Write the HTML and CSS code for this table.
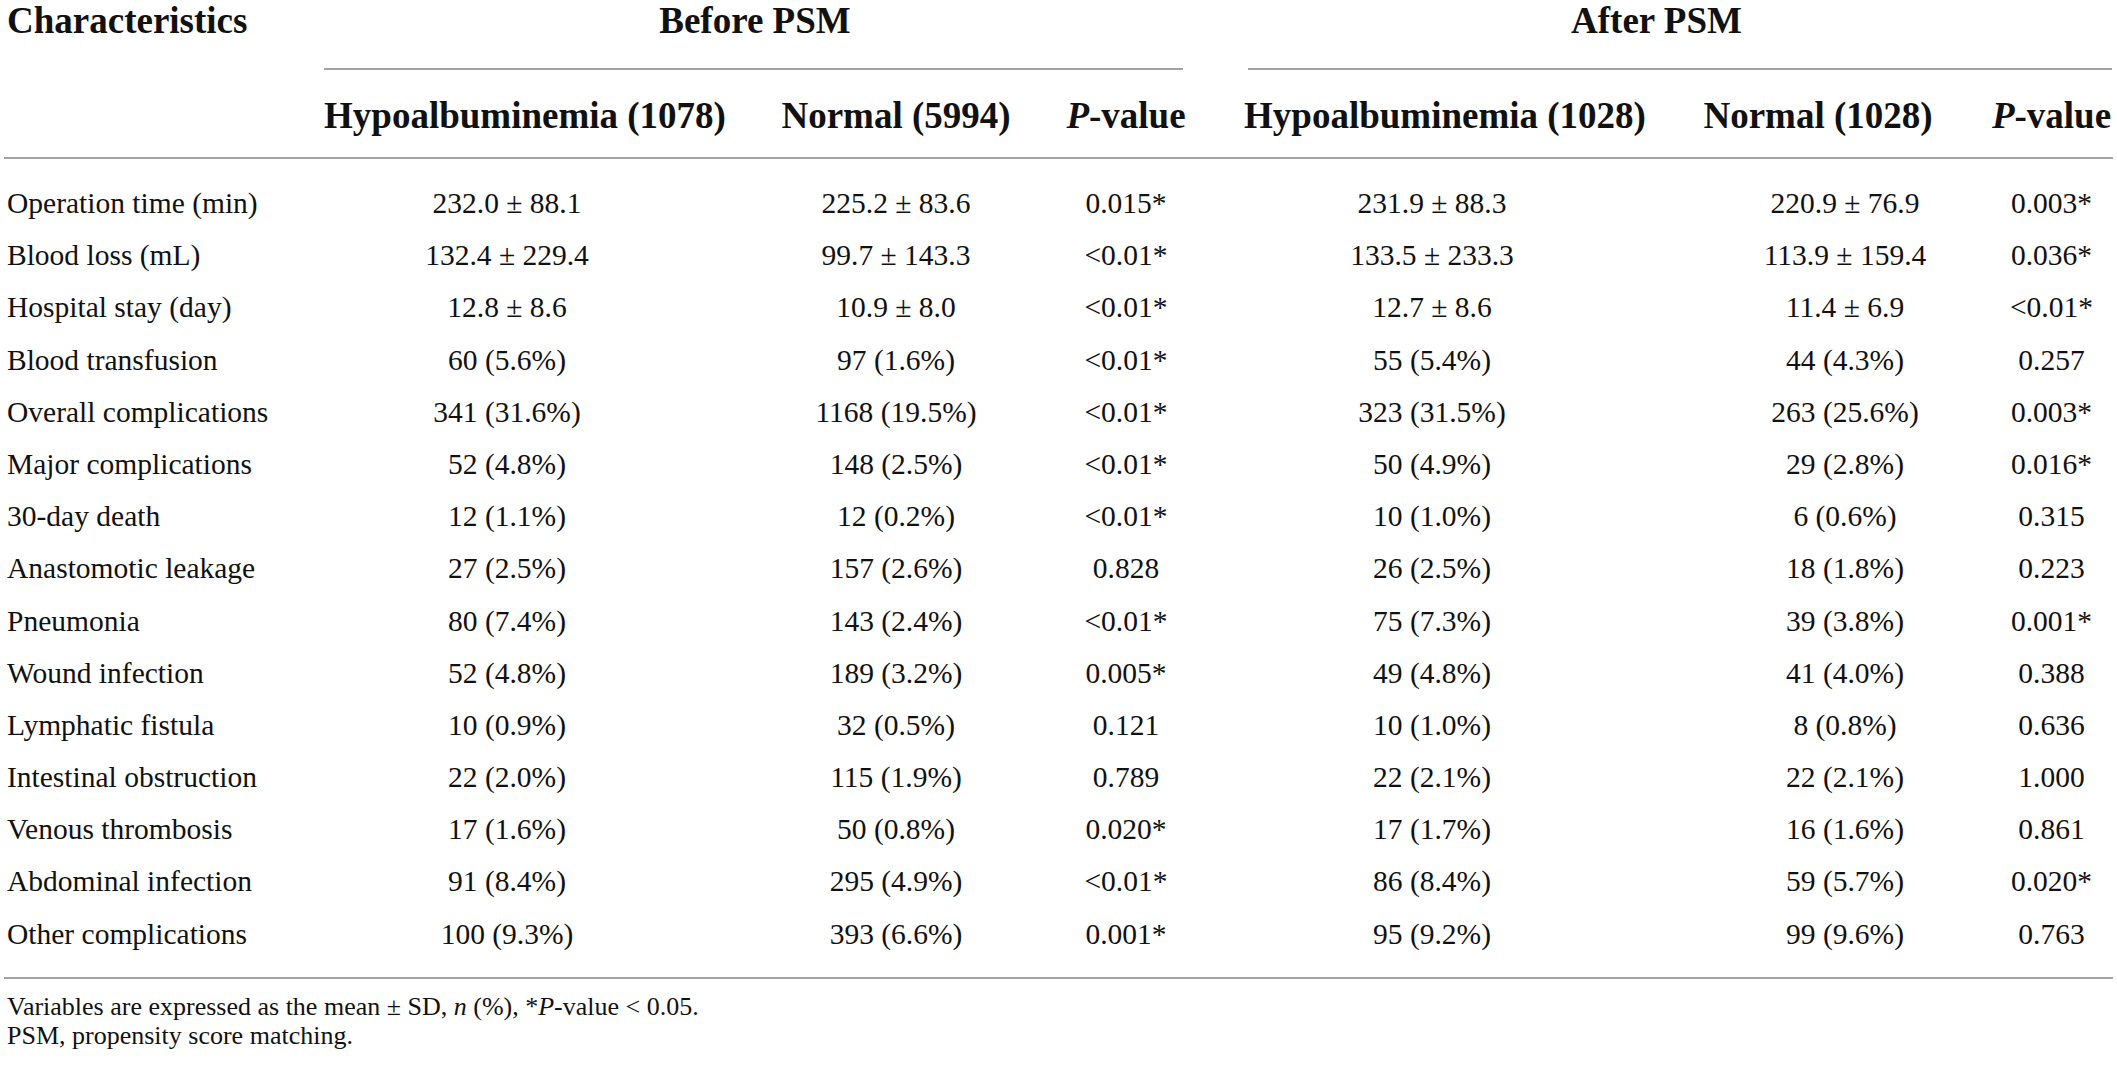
FILE: index.html
```html
<!DOCTYPE html>
<html lang="en">
<head>
<meta charset="utf-8">
<title>Table</title>
<link rel="stylesheet" href="styles.css">
</head>
<body>
<div class="page">
  <div class="thead">
    <div class="char">Characteristics</div>
    <div class="grp grp-before">Before PSM</div>
    <div class="grp grp-after">After PSM</div>
    <div class="sub sub0"></div>
    <div class="sub">Hypoalbuminemia (1078)</div>
    <div class="sub">Normal (5994)</div>
    <div class="sub"><i>P</i>-value</div>
    <div class="sub">Hypoalbuminemia (1028)</div>
    <div class="sub h5">Normal (1028)</div>
    <div class="sub"><i>P</i>-value</div>
  </div>
  <div class="tbody">
    <div class="lbl">Operation time (min)</div><div class="k1">232.0 ± 88.1</div><div>225.2 ± 83.6</div><div>0.015*</div><div class="k4">231.9 ± 88.3</div><div class="k5">220.9 ± 76.9</div><div>0.003*</div>
    <div class="lbl">Blood loss (mL)</div><div class="k1">132.4 ± 229.4</div><div>99.7 ± 143.3</div><div>&lt;0.01*</div><div class="k4">133.5 ± 233.3</div><div class="k5">113.9 ± 159.4</div><div>0.036*</div>
    <div class="lbl">Hospital stay (day)</div><div class="k1">12.8 ± 8.6</div><div>10.9 ± 8.0</div><div>&lt;0.01*</div><div class="k4">12.7 ± 8.6</div><div class="k5">11.4 ± 6.9</div><div>&lt;0.01*</div>
    <div class="lbl">Blood transfusion</div><div class="k1">60 (5.6%)</div><div>97 (1.6%)</div><div>&lt;0.01*</div><div class="k4">55 (5.4%)</div><div class="k5">44 (4.3%)</div><div>0.257</div>
    <div class="lbl">Overall complications</div><div class="k1">341 (31.6%)</div><div>1168 (19.5%)</div><div>&lt;0.01*</div><div class="k4">323 (31.5%)</div><div class="k5">263 (25.6%)</div><div>0.003*</div>
    <div class="lbl">Major complications</div><div class="k1">52 (4.8%)</div><div>148 (2.5%)</div><div>&lt;0.01*</div><div class="k4">50 (4.9%)</div><div class="k5">29 (2.8%)</div><div>0.016*</div>
    <div class="lbl">30-day death</div><div class="k1">12 (1.1%)</div><div>12 (0.2%)</div><div>&lt;0.01*</div><div class="k4">10 (1.0%)</div><div class="k5">6 (0.6%)</div><div>0.315</div>
    <div class="lbl">Anastomotic leakage</div><div class="k1">27 (2.5%)</div><div>157 (2.6%)</div><div>0.828</div><div class="k4">26 (2.5%)</div><div class="k5">18 (1.8%)</div><div>0.223</div>
    <div class="lbl">Pneumonia</div><div class="k1">80 (7.4%)</div><div>143 (2.4%)</div><div>&lt;0.01*</div><div class="k4">75 (7.3%)</div><div class="k5">39 (3.8%)</div><div>0.001*</div>
    <div class="lbl">Wound infection</div><div class="k1">52 (4.8%)</div><div>189 (3.2%)</div><div>0.005*</div><div class="k4">49 (4.8%)</div><div class="k5">41 (4.0%)</div><div>0.388</div>
    <div class="lbl">Lymphatic fistula</div><div class="k1">10 (0.9%)</div><div>32 (0.5%)</div><div>0.121</div><div class="k4">10 (1.0%)</div><div class="k5">8 (0.8%)</div><div>0.636</div>
    <div class="lbl">Intestinal obstruction</div><div class="k1">22 (2.0%)</div><div>115 (1.9%)</div><div>0.789</div><div class="k4">22 (2.1%)</div><div class="k5">22 (2.1%)</div><div>1.000</div>
    <div class="lbl">Venous thrombosis</div><div class="k1">17 (1.6%)</div><div>50 (0.8%)</div><div>0.020*</div><div class="k4">17 (1.7%)</div><div class="k5">16 (1.6%)</div><div>0.861</div>
    <div class="lbl">Abdominal infection</div><div class="k1">91 (8.4%)</div><div>295 (4.9%)</div><div>&lt;0.01*</div><div class="k4">86 (8.4%)</div><div class="k5">59 (5.7%)</div><div>0.020*</div>
    <div class="lbl">Other complications</div><div class="k1">100 (9.3%)</div><div>393 (6.6%)</div><div>0.001*</div><div class="k4">95 (9.2%)</div><div class="k5">99 (9.6%)</div><div>0.763</div>
  </div>
  <div class="notes">
    <p>Variables are expressed as the mean ± SD, <i>n</i> (%), *<i>P</i>-value &lt; 0.05.</p>
    <p>PSM, propensity score matching.</p>
  </div>
</div>
</body>
</html>
```
FILE: styles.css
```css
html, body {
  margin: 0;
  padding: 0;
  background: #ffffff;
}
body {
  font-family: "Liberation Serif", "Times New Roman", serif;
  color: #111111;
}
.page {
  width: 2109px;
  padding-left: 4px;
}
.thead,
.tbody {
  display: grid;
  grid-template-columns: 306px 430px 312px 148px 490px 300px 123px;
}
.thead {
  font-size: 37px;
  font-weight: bold;
  line-height: 41px;
}
.char {
  grid-column: 1;
  grid-row: 1;
  padding-left: 3px;
}
.grp {
  grid-row: 1;
  text-align: center;
}
.grp::after {
  content: "";
  display: block;
  height: 2px;
  margin-top: 27px;
  background: #a3a3a3;
}
.grp-before { grid-column: 2 / 5; }
.grp-before::after { margin-left: 14px; margin-right: 17px; }
.grp-after { grid-column: 5 / 8; }
.grp-after::after { margin-left: 48px; margin-right: 1px; }
.sub {
  grid-row: 2;
  text-align: center;
  white-space: nowrap;
  padding-top: 25px;
  padding-bottom: 21px;
  border-bottom: 2px solid #a3a3a3;
}
.sub0 { grid-column: 1; }
.h5 { padding-right: 44px; }
.tbody {
  font-size: 29.5px;
  grid-auto-rows: 52.2px;
  line-height: 52.2px;
  padding-top: 18px;
  padding-bottom: 17px;
  border-bottom: 2px solid #a3a3a3;
}
.tbody > div {
  text-align: center;
  white-space: nowrap;
}
.tbody > .lbl {
  text-align: left;
  padding-left: 3px;
}
.tbody > .k1 { padding-right: 36px; }
.tbody > .k4 { padding-right: 26px; }
.tbody > .k5 { padding-left: 10px; }
.notes {
  font-size: 26px;
  line-height: 29px;
  padding-top: 13px;
  padding-left: 3px;
}
.notes p {
  margin: 0;
}
```
